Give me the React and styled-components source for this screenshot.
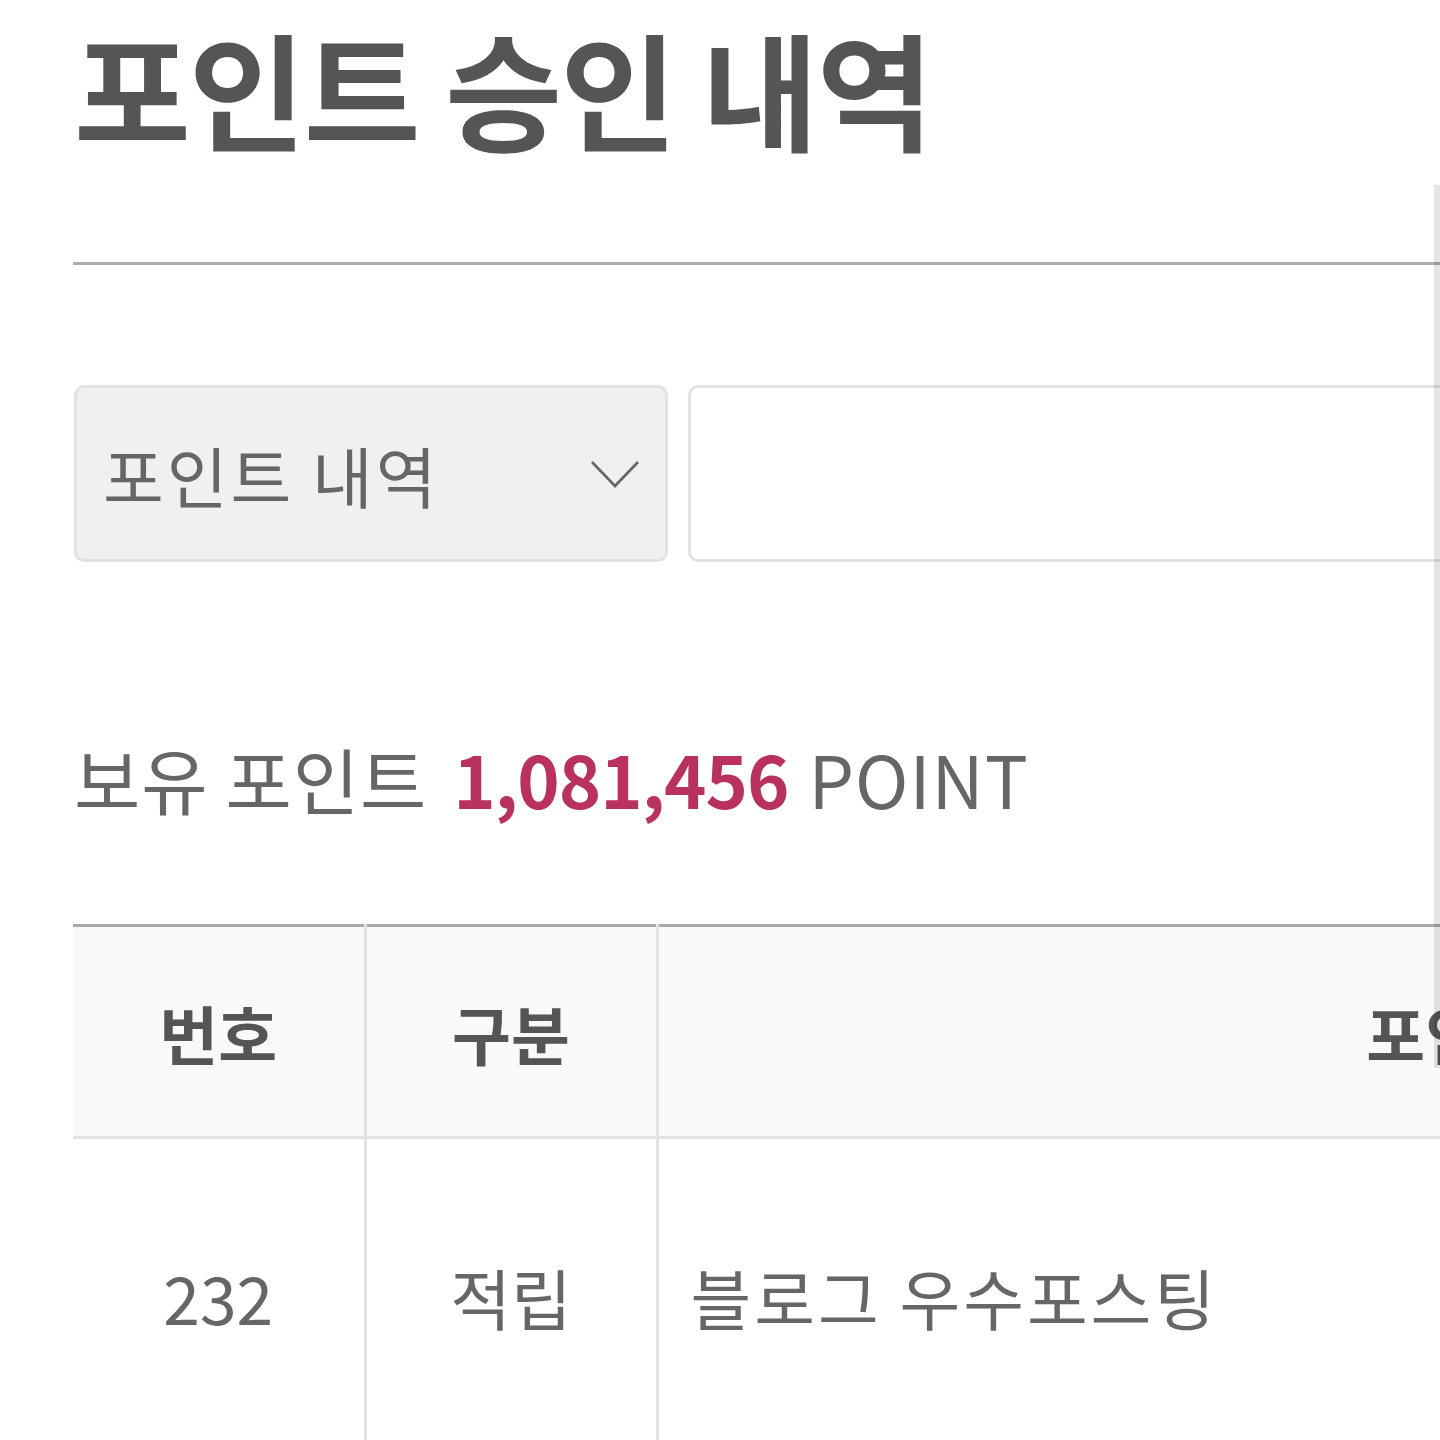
import React from 'react'
import styled, {createGlobalStyle} from "styled-components";

const GlobalStyle = createGlobalStyle`
  html, body {
    margin: 0;
    padding: 0;
    background: #ffffff;
    overflow: hidden;
  }
  body {
    font-family: "Noto Sans CJK KR", "Noto Sans", sans-serif;
    color: #666666;
  }
  * {
    box-sizing: border-box;
  }
`

const Page = styled.div`
  width: 1440px;
  height: 1440px;
  overflow: hidden;
  position: relative;
  padding-left: 74px;
`

const Inner = styled.div`
  width: 2400px;
  display: flex;
  flex-direction: column;
`

const Title = styled.h1`
  margin: 12px 0 0 0;
  font-size: 127px;
  font-weight: 700;
  line-height: 150px;
  letter-spacing: -2px;
  color: #555555;
`

const Divider = styled.div`
  margin-top: 100px;
  height: 3px;
  background: #adadad;
  margin-left: -1px;
`

const FilterRow = styled.div`
  display: flex;
  gap: 20px;
  margin-top: 120px;
  height: 177px;
`

const Select = styled.div`
  width: 594px;
  height: 100%;
  background: #f0f0f0;
  border: 3px solid #e2e2e2;
  border-radius: 10px;
  display: flex;
  align-items: center;
  justify-content: space-between;
  padding: 0 24px 0 26px;
  font-size: 66px;
  color: #666666;
  letter-spacing: 3px;
`

const SearchInput = styled.div`
  width: 1200px;
  height: 100%;
  background: #ffffff;
  border: 3px solid #e2e2e2;
  border-radius: 10px;
`

const Summary = styled.div`
  margin-top: 176px;
  font-size: 72px;
  line-height: 80px;
  color: #666666;
  white-space: nowrap;
  letter-spacing: 1px;
`

const Amount = styled.strong`
  color: #b8315f;
  font-weight: 700;
  margin: 0 20px 0 26px;
  letter-spacing: -1px;
`

const Table = styled.table`
  margin-top: 106px;
  margin-left: -1px;
  width: 2310px;
  border-collapse: collapse;
  table-layout: fixed;
  border-top: 3px solid #aaaaaa;
`

const HeadCell = styled.th`
  width: ${props => props.w}px;
  height: 212px;
  background: #f9f9f9;
  border-bottom: 3px solid #e2e2e2;
  border-left: ${props => props.first ? 'none' : '3px solid #e2e2e2'};
  font-size: 64px;
  font-weight: 700;
  color: #555555;
  text-align: center;
  padding: 0;
`

const Cell = styled.td`
  height: 316px;
  border-left: ${props => props.first ? 'none' : '3px solid #e2e2e2'};
  font-size: 66px;
  color: #666666;
  text-align: ${props => props.align || 'center'};
  padding: ${props => props.align === 'left' ? '0 0 0 32px' : '0'};
  white-space: nowrap;
  letter-spacing: ${props => props.align === 'left' ? '3px' : '0'};
`

const ScrollThumb = styled.div`
  position: absolute;
  top: 185px;
  right: 0;
  width: 6px;
  height: 883px;
  background: rgba(0, 0, 0, 0.1);
`

const Chevron = () => (
    <svg width="52" height="32" viewBox="0 0 52 32">
        <path d="M3 4 L26 28 L49 4" fill="none" stroke="#666666" strokeWidth="2.6"/>
    </svg>
)

const rows = [
    {id: 232, type: '적립', title: '블로그 우수포스팅'},
]

const App = () => {
    return (
        <Page>
            <GlobalStyle/>
            <Inner>
                <Title>포인트 승인 내역</Title>
                <Divider/>
                <FilterRow>
                    <Select>
                        <span>포인트 내역</span>
                        <Chevron/>
                    </Select>
                    <SearchInput/>
                </FilterRow>
                <Summary>
                    보유 포인트<Amount>1,081,456</Amount>POINT
                </Summary>
                <Table>
                    <thead>
                    <tr>
                        <HeadCell w={292} first>번호</HeadCell>
                        <HeadCell w={292}>구분</HeadCell>
                        <HeadCell w={1726}>포인트 내역</HeadCell>
                    </tr>
                    </thead>
                    <tbody>
                    {rows.map(row => (
                        <tr key={row.id}>
                            <Cell first>{row.id}</Cell>
                            <Cell>{row.type}</Cell>
                            <Cell align="left">{row.title}</Cell>
                        </tr>
                    ))}
                    </tbody>
                </Table>
            </Inner>
            <ScrollThumb/>
        </Page>
    )
}

export default App
